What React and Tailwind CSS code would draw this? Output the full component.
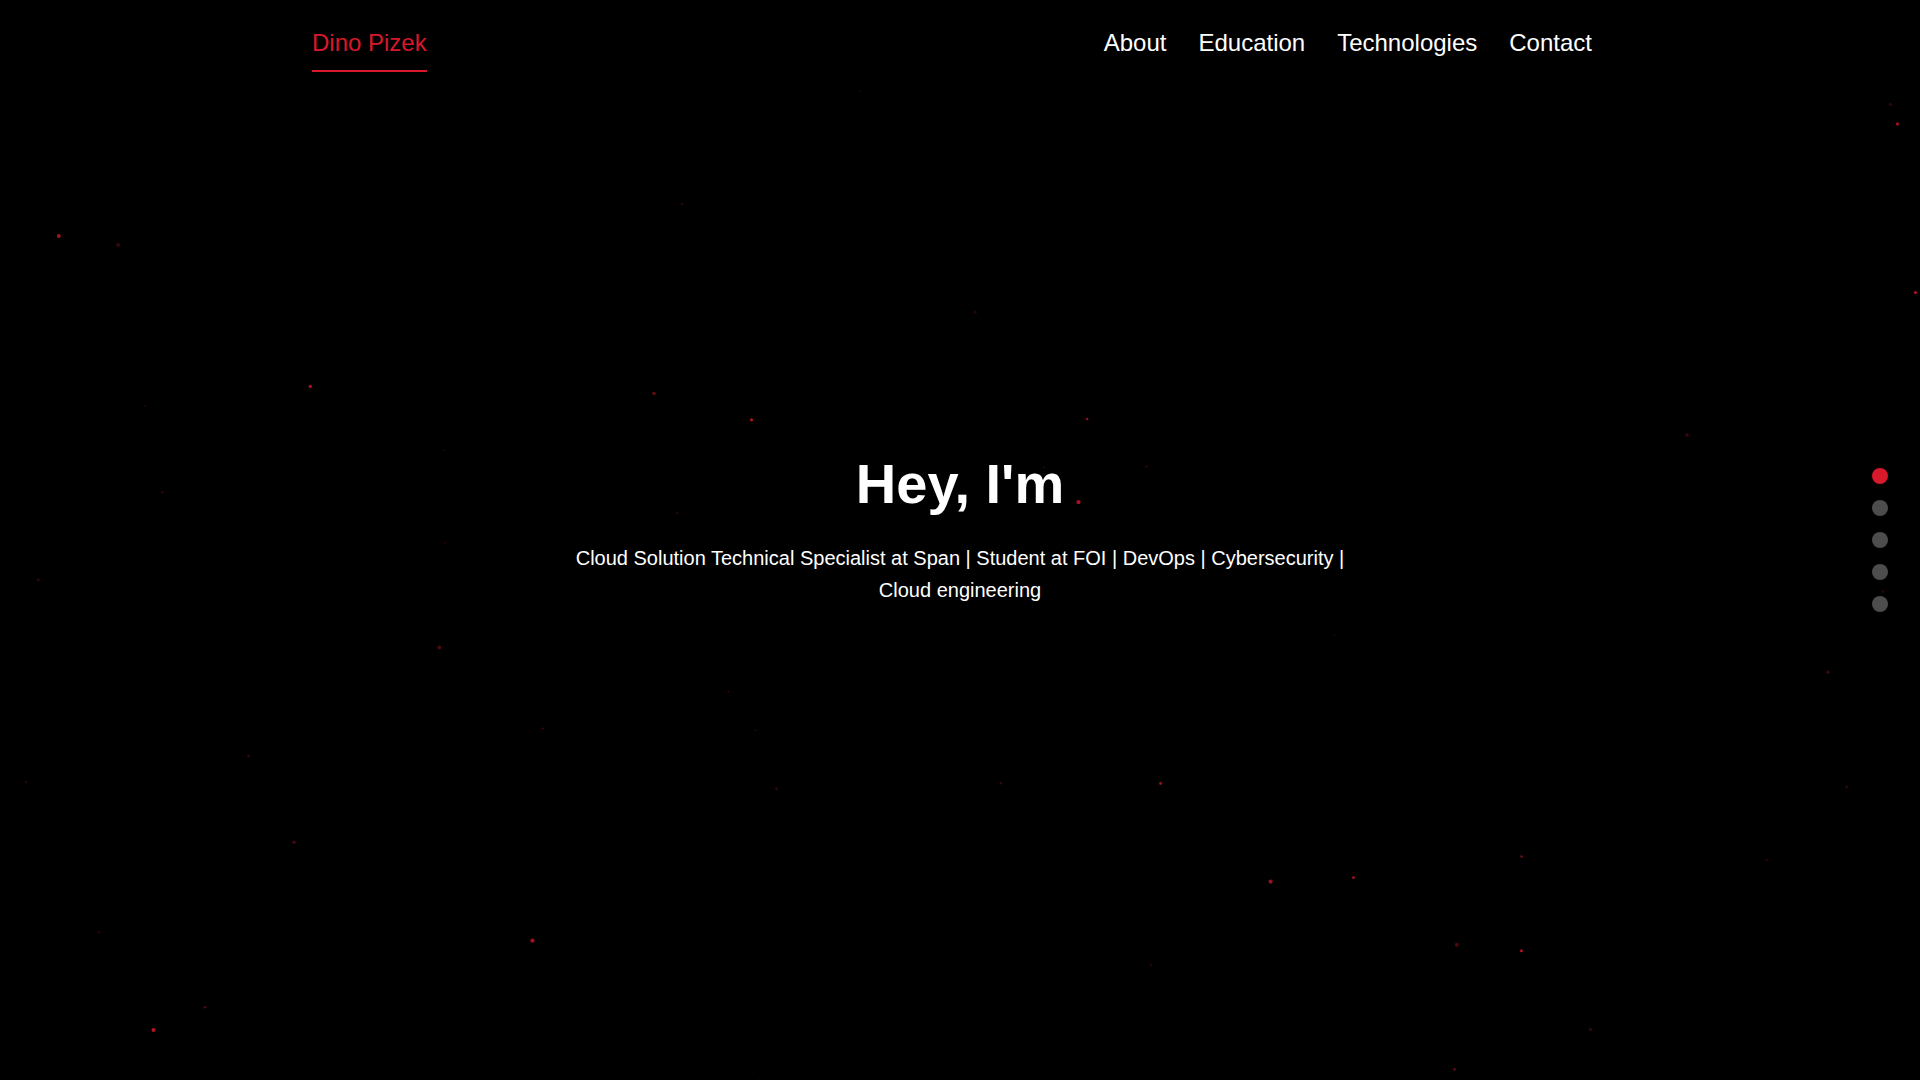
import React, { useState } from 'react'

const links = [
  { id: 'about', label: 'About' },
  { id: 'education', label: 'Education' },
  { id: 'technologies', label: 'Technologies' },
  { id: 'contact', label: 'Contact' },
]

const sections = ['Home', 'About', 'Education', 'Technologies', 'Contact']

// x, y, radius, opacity
const particles = [
  [58.8, 236, 2, 0.75], [118.2, 245, 2, 0.25], [310.3, 386.4, 1.7, 0.8], [145, 406, 1.2, 0.12],
  [860, 91.2, 0.8, 0.25], [714.5, 169, 0.8, 0.1], [682.3, 204, 1.3, 0.18], [975.3, 312, 1.6, 0.2],
  [654, 393.4, 1.7, 0.48], [751.5, 419.8, 1.6, 0.8], [1087.2, 419, 1.2, 0.7], [1890.4, 104.4, 1.6, 0.22],
  [1897.5, 124, 1.7, 0.7], [1915.5, 292.5, 1.6, 0.8], [1687, 435, 2, 0.22], [1044, 467.5, 0.8, 0.3],
  [1146.5, 466.4, 1.2, 0.22], [1078.5, 502.2, 2.1, 0.75], [677.2, 513.2, 1.2, 0.2], [1091, 551, 1.2, 0.5],
  [1883, 591.5, 1.6, 0.16], [1828.2, 672.2, 1.6, 0.3], [443.5, 450.5, 0.6, 0.45], [162.3, 492.4, 1.2, 0.25],
  [444.5, 543, 0.7, 0.35], [38.3, 579.7, 1.5, 0.22], [439.4, 647.4, 2, 0.35], [543, 728.4, 0.9, 0.35],
  [248.5, 756, 1.3, 0.28], [26, 782, 1.2, 0.18], [294, 842.3, 1.5, 0.38], [99, 932.3, 1.5, 0.16],
  [532.4, 940.6, 2.1, 0.75], [205, 1007.3, 1.2, 0.38], [153.5, 1030, 2, 0.85], [728.5, 691.5, 0.6, 0.5],
  [755.5, 730.2, 1, 0.2], [776.4, 788.7, 1.6, 0.2], [1001, 783.2, 1.2, 0.28], [1160.6, 783.3, 1.6, 0.65],
  [1270.6, 881.6, 2.1, 0.7], [1150.8, 965, 1.2, 0.18], [758.5, 1079.7, 0.8, 0.15], [1334.5, 634.7, 0.8, 0.22],
  [1846.5, 787, 1.6, 0.2], [1521.6, 856.6, 1.3, 0.5], [1767, 860, 1.2, 0.18], [1353.5, 877.5, 1.6, 0.65],
  [1456.8, 944.7, 2, 0.35], [1521.4, 950.7, 1.5, 0.8], [1590.4, 1029.4, 1.6, 0.24], [1454.5, 1069.4, 1.3, 0.45],
]

function Particles() {
  return (
    <svg className="absolute inset-0 w-full h-full" viewBox="0 0 1920 1080" preserveAspectRatio="xMidYMid slice" aria-hidden="true">
      {particles.map(([x, y, r, o]) => (
        <circle key={`${x}-${y}`} cx={x} cy={y} r={r} fill="#d8182b" opacity={o} />
      ))}
    </svg>
  )
}

export default function App() {
  const [active, setActive] = useState('Home')

  return (
    <div className="relative min-h-screen flex flex-col bg-black text-white overflow-hidden font-['Liberation_Sans',Arial,sans-serif]">
      <Particles />

      {/* Header */}
      <header className="absolute inset-x-0 top-0 z-20">
        <nav className="max-w-[1320px] mx-auto px-3 pt-6 flex items-start justify-between text-2xl leading-[38px]">
          <a href="#home" className="pb-2 border-b-2 border-[#d8182b] text-[#d8182b]">Dino Pizek</a>
          <ul className="flex">
            {links.map(link => (
              <li key={link.id}>
                <a href={`#${link.id}`} className="block px-4 hover:text-[#d8182b] transition-colors">{link.label}</a>
              </li>
            ))}
          </ul>
        </nav>
      </header>

      {/* Hero */}
      <main className="relative z-10 flex-1 flex flex-col items-center justify-center px-8 text-center">
        <h1 className="mb-[26px] text-[56px] leading-[65px] font-bold">Hey, I'm</h1>
        <p className="mb-6 max-w-[800px] text-xl leading-8">
          Cloud Solution Technical Specialist at Span | Student at FOI | DevOps | Cybersecurity | Cloud engineering
        </p>
      </main>

      {/* Section dots */}
      <div className="absolute inset-y-0 right-8 z-20 flex flex-col justify-center gap-4">
        {sections.map(name => (
          <button
            key={name}
            aria-label={name}
            onClick={() => setActive(name)}
            className={`size-4 rounded-full cursor-pointer transition-colors ${active === name ? 'bg-[#d8182b]' : 'bg-[#4d4d4d]'}`}
          />
        ))}
      </div>
    </div>
  )
}
